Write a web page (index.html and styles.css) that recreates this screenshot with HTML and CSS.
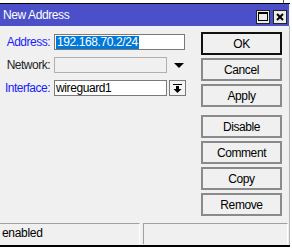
FILE: index.html
```html
<!DOCTYPE html>
<html lang="en">
<head>
  <meta charset="UTF-8">
  <title>New Address</title>
  <link rel="stylesheet" href="styles.css">
</head>
<body>
  <div class="behind"></div>
  <div class="window">
    <div class="titlebar">
      <span class="title">New Address</span>
      <span class="tb-btn"><span class="max-box"></span></span>
      <span class="tb-btn">
        <svg width="8" height="8" viewBox="0 0 8 8"><path d="M1 1 L7 7 M7 1 L1 7" stroke="#000" stroke-width="2"/></svg>
      </span>
    </div>

    <div class="content">
      <div class="form">
        <div class="row">
          <label class="lbl link">Address:</label>
          <div class="field"><span class="sel">192.168.70.2/24</span></div>
        </div>
        <div class="row">
          <label class="lbl">Network:</label>
          <div class="field short disabled"></div>
          <span class="arrow">
            <svg width="10" height="5" viewBox="0 0 10 5"><path d="M0 0 H10 L5 5 Z" fill="#000"/></svg>
          </span>
        </div>
        <div class="row">
          <label class="lbl link">Interface:</label>
          <div class="field short">wireguard1</div>
          <span class="dd-btn">
            <svg width="9" height="9" viewBox="0 0 9 9"><path d="M0 0.5 H9" stroke="#000"/><path d="M3 2 H6 V5 H8.5 L4.5 9 L0.5 5 H3 Z" fill="#000"/></svg>
          </span>
        </div>
      </div>

      <div class="buttons">
        <button class="default">OK</button>
        <button>Cancel</button>
        <button>Apply</button>
        <button class="spaced">Disable</button>
        <button>Comment</button>
        <button>Copy</button>
        <button>Remove</button>
      </div>
    </div>

    <div class="statusbar">
      <div class="pane first">enabled</div>
      <div class="pane second"></div>
    </div>
  </div>
</body>
</html>
```

FILE: styles.css
```css
* {
  box-sizing: border-box;
}

body {
  margin: 0;
  background: #fff;
  font-family: 'Liberation Sans', Arial, sans-serif;
  font-size: 11px;
  color: #000;
}

.behind {
  width: 284px;
  height: 3px;
  border-right: 1px solid #555;
}

.window {
  width: 290px;
  background: #f0f0f0;
  border-top: 1px solid #000;
  border-bottom: 2px solid #000;
}

.titlebar {
  height: 22px;
  width: 289px;
  background: #4b4fc8;
  display: flex;
  align-items: center;
  padding: 0 2px 0 3px;
}

.title {
  flex: 1;
  color: #fff;
  font-size: 12px;
  letter-spacing: -0.4px;
  padding-bottom: 1px;
}

.tb-btn {
  width: 14px;
  height: 14px;
  margin-left: 3px;
  margin-top: 3px;
  background: #ececec;
  border: 1px solid #222;
  display: flex;
  align-items: center;
  justify-content: center;
}

.max-box {
  width: 10px;
  height: 9px;
  border: 1px solid #000;
  border-top-width: 2px;
}

.content {
  height: 197px;
  display: flex;
  border-right: 1px solid #b4b4b4;
}

.form {
  width: 201px;
  padding-top: 8px;
  display: flex;
  flex-direction: column;
  gap: 7px;
}

.row {
  height: 16px;
  display: flex;
  align-items: center;
}

.lbl {
  width: 54px;
  padding-right: 4px;
  text-align: right;
  color: #222;
  font-size: 12px;
  letter-spacing: -0.5px;
}

.lbl.link {
  color: #1a1aff;
}

.field {
  width: 131px;
  height: 16px;
  background: #fff;
  border: 1px solid #7a7a7a;
  padding: 0 1px;
  line-height: 14px;
  font-size: 12px;
  letter-spacing: -0.4px;
}

.field.short {
  width: 113px;
}

.field.disabled {
  background: #f0f0f0;
  border-color: #b0b0b0;
}

.sel {
  background: #0078d7;
  color: #fff;
  padding: 0 1px;
  display: inline-block;
  line-height: 13px;
}

.arrow {
  margin-left: 7px;
  display: flex;
}

.dd-btn {
  width: 17px;
  height: 16px;
  margin-left: 2px;
  border: 1px solid #7a7a7a;
  background: #f4f4f4;
  display: flex;
  align-items: center;
  justify-content: center;
}

.buttons {
  padding-top: 6px;
  display: flex;
  flex-direction: column;
  gap: 3px;
}

button {
  width: 81px;
  height: 23px;
  margin: 0;
  padding: 0;
  background: #f0f0f0;
  border: 2px solid #8a8a8a;
  font-family: inherit;
  font-size: 12px;
  letter-spacing: -0.4px;
  color: #000;
}

button.default {
  border-color: #111;
}

button.spaced {
  margin-top: 5px;
}

.statusbar {
  height: 22px;
  display: flex;
  gap: 3px;
  border-right: 1px solid #b4b4b4;
}

.pane {
  height: 21px;
  border-top: 1px solid #a0a0a0;
  border-right: 1px solid #fff;
  line-height: 19px;
  padding-left: 2px;
  font-size: 12px;
  letter-spacing: -0.3px;
}

.pane.first {
  width: 140px;
}

.pane.second {
  width: 145px;
  border-left: 1px solid #a0a0a0;
}
```
